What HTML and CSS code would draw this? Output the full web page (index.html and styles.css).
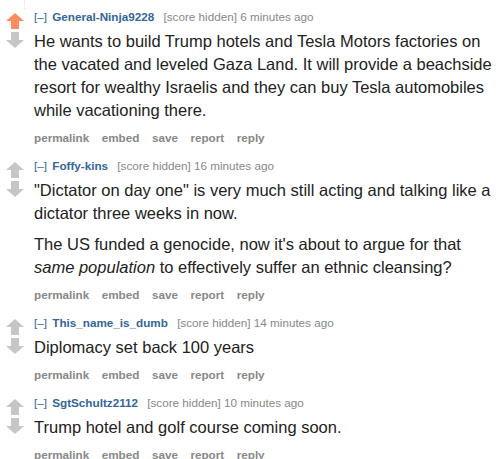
FILE: index.html
```html
<!DOCTYPE html>
<html lang="en">
<head>
    <meta charset="UTF-8">
    <meta name="viewport" content="width=device-width, initial-scale=1.0">
    <title>Comments</title>
    <link rel="stylesheet" href="styles.css">
</head>
<body>
    <div class="thread-top"></div>

    <div class="comment">
        <div class="midcol">
            <svg class="arrow up upmod" viewBox="0 0 18 16"><polygon points="9,0 18,8 13,8 13,16 5,16 5,8 0,8"/></svg>
            <svg class="arrow down" viewBox="0 0 18 16"><polygon points="9,16 18,8 13,8 13,0 5,0 5,8 0,8"/></svg>
        </div>
        <div class="entry">
            <p class="tagline">
                <a class="expand">[–]</a>
                <a class="author">General-Ninja9228</a>
                <span class="score">[score hidden]</span>
                <span class="time">6 minutes ago</span>
            </p>
            <div class="md">
                <p>He wants to build Trump hotels and Tesla Motors factories on the vacated and leveled Gaza Land. It will provide a beachside resort for wealthy Israelis and they can buy Tesla automobiles while vacationing there.</p>
            </div>
            <ul class="buttons">
                <li>permalink</li>
                <li>embed</li>
                <li>save</li>
                <li>report</li>
                <li>reply</li>
            </ul>
        </div>
    </div>

    <div class="comment">
        <div class="midcol">
            <svg class="arrow up" viewBox="0 0 18 16"><polygon points="9,0 18,8 13,8 13,16 5,16 5,8 0,8"/></svg>
            <svg class="arrow down" viewBox="0 0 18 16"><polygon points="9,16 18,8 13,8 13,0 5,0 5,8 0,8"/></svg>
        </div>
        <div class="entry">
            <p class="tagline">
                <a class="expand">[–]</a>
                <a class="author">Foffy-kins</a>
                <span class="score">[score hidden]</span>
                <span class="time">16 minutes ago</span>
            </p>
            <div class="md">
                <p>"Dictator on day one" is very much still acting and talking like a dictator three weeks in now.</p>
                <p>The US funded a genocide, now it's about to argue for that <em>same population</em> to effectively suffer an ethnic cleansing?</p>
            </div>
            <ul class="buttons">
                <li>permalink</li>
                <li>embed</li>
                <li>save</li>
                <li>report</li>
                <li>reply</li>
            </ul>
        </div>
    </div>

    <div class="comment">
        <div class="midcol">
            <svg class="arrow up" viewBox="0 0 18 16"><polygon points="9,0 18,8 13,8 13,16 5,16 5,8 0,8"/></svg>
            <svg class="arrow down" viewBox="0 0 18 16"><polygon points="9,16 18,8 13,8 13,0 5,0 5,8 0,8"/></svg>
        </div>
        <div class="entry">
            <p class="tagline">
                <a class="expand">[–]</a>
                <a class="author">This_name_is_dumb</a>
                <span class="score">[score hidden]</span>
                <span class="time">14 minutes ago</span>
            </p>
            <div class="md">
                <p>Diplomacy set back 100 years</p>
            </div>
            <ul class="buttons">
                <li>permalink</li>
                <li>embed</li>
                <li>save</li>
                <li>report</li>
                <li>reply</li>
            </ul>
        </div>
    </div>

    <div class="comment">
        <div class="midcol">
            <svg class="arrow up" viewBox="0 0 18 16"><polygon points="9,0 18,8 13,8 13,16 5,16 5,8 0,8"/></svg>
            <svg class="arrow down" viewBox="0 0 18 16"><polygon points="9,16 18,8 13,8 13,0 5,0 5,8 0,8"/></svg>
        </div>
        <div class="entry">
            <p class="tagline">
                <a class="expand">[–]</a>
                <a class="author">SgtSchultz2112</a>
                <span class="score">[score hidden]</span>
                <span class="time">10 minutes ago</span>
            </p>
            <div class="md">
                <p>Trump hotel and golf course coming soon.</p>
            </div>
            <ul class="buttons">
                <li>permalink</li>
                <li>embed</li>
                <li>save</li>
                <li>report</li>
                <li>reply</li>
            </ul>
        </div>
    </div>
</body>
</html>
```

FILE: styles.css
```css
body {
    font-family: "Liberation Sans", Arial, sans-serif;
    margin: 0;
    background: #fff;
    color: #222;
}
.thread-top {
    height: 8.5px;
    margin-left: 24px;
    border-left: 1px dotted #dde;
}
.comment {
    display: flex;
    padding-right: 4px;
    margin-bottom: 12px;
}
.midcol {
    width: 18px;
    padding: 4px 10px 0 6px;
    display: flex;
    flex-direction: column;
    gap: 3px;
    flex-shrink: 0;
}
.arrow {
    width: 18px;
    height: 16px;
    fill: #c6c6c6;
}
.arrow.upmod {
    fill: #ff8b60;
}
.entry {
    flex: 1;
}
.tagline {
    margin: 0;
    font-size: 11.7px;
    line-height: 16px;
    color: #888;
}
.tagline .expand {
    color: #369;
    margin-right: 2px;
}
.tagline .author {
    color: #369;
    font-weight: bold;
    margin-right: 6px;
}
.md {
    margin-top: 5px;
    font-size: 16.5px;
    line-height: 23px;
}
.md p {
    margin: 0 0 8px;
}
.md p:last-child {
    margin-bottom: 0;
}
.buttons {
    list-style: none;
    margin: 8px 0 0;
    padding: 0;
    display: flex;
    gap: 12.5px;
    font-size: 11.7px;
    line-height: 16px;
    font-weight: bold;
    color: #888;
}
```
